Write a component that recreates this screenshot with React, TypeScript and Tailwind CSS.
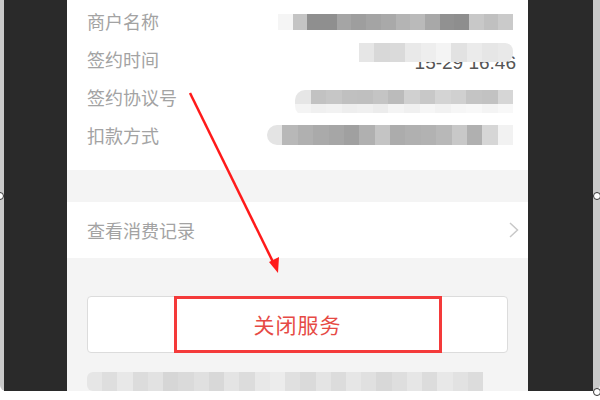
import React from "react";

const Blur = ({ colors, w, h, cls = "" }: { colors: string[]; w: number; h: number; cls?: string }) => (
  <div className={`flex overflow-hidden ${cls}`} style={{ width: w, height: h }}>
    {colors.map((c, i) => (
      <div key={i} className="flex-1 h-full" style={{ background: c }} />
    ))}
  </div>
);

const Blur2 = ({ top, bottom, w, h1, h2, cls = "" }: { top: string[]; bottom: string[]; w: number; h1: number; h2: number; cls?: string }) => (
  <div className={`flex flex-col overflow-hidden ${cls}`} style={{ width: w }}>
    <Blur colors={top} w={w} h={h1} />
    <Blur colors={bottom} w={w} h={h2} />
  </div>
);

export default function App() {
  const font = { fontFamily: '"Noto Sans CJK SC", "Noto Sans", sans-serif' };
  return (
    <div className="relative w-[600px] h-[400px] bg-white overflow-hidden" style={font}>
      <div className="flex h-[391px] bg-[#c9c9c9] rounded-b-[6px] pl-[4px] pr-[7px]">
        <div className="flex flex-1 bg-[#2a2a2a]">
          <div className="w-[63px]" />
          <div className="w-[461px] flex flex-col bg-[#f4f4f4]">
            {/* top info section */}
            <div className="bg-white h-[170px] pt-[2px] pl-[20px] pr-[15px] flex flex-col">
              <div className="h-[38px] flex justify-between">
                <span className="text-[18px] leading-[38px] text-[#a3a3a3]">商户名称</span>
                <Blur
                  cls="mt-[12px]"
                  w={235}
                  h={16}
                  colors={["#f5f5f5", "#c4c4c4", "#8f8f8f", "#8f8f8f", "#a5a5a5", "#9e9e9e", "#a4a4a4", "#a9a9a9", "#b4b4b4", "#bababa", "#a8a8a8", "#919191", "#8e8e8e", "#c8c8c8", "#c0c0c0", "#cacaca"]}
                />
              </div>
              <div className="h-[38px] flex justify-between">
                <span className="text-[18px] leading-[38px] text-[#a3a3a3]">签约时间</span>
                <div className="relative w-[157px] h-[38px] mr-[-3px]">
                  <span className="absolute right-0 top-[13px] text-[19px] leading-[19px] text-[#555]" style={{ fontFamily: '"Liberation Sans", sans-serif' }}>
                    15-29 16:46
                  </span>
                  <Blur
                    cls="absolute left-0 top-[3px] rounded-r-[8px]"
                    w={154}
                    h={19}
                    colors={["#e6e6e6", "#d8d8d8", "#dadada", "#e9e9e9", "#eeeeee", "#f4f4f4", "#e2e2e2", "#ebebeb", "#e6e6e6", "#e9e9e9"]}
                  />
                </div>
              </div>
              <div className="h-[38px] flex justify-between">
                <span className="text-[18px] leading-[38px] text-[#a3a3a3]">签约协议号</span>
                <Blur2
                  cls="mt-[12px] rounded-l-[10px]"
                  w={218}
                  h1={14}
                  h2={9}
                  top={["#e6e6e6", "#c2c2c2", "#c6c6c6", "#c0c0c0", "#bfbfbf", "#c4c4c4", "#bbbbbb", "#d0d0d0", "#c8c8c8", "#d4d4d4", "#d0d0d0", "#c4c4c4", "#c2c2c2", "#d6d6d6"]}
                  bottom={["#f4f4f4", "#f0f0f0", "#f2f2f2", "#eeeeee", "#f0f0f0", "#ececec", "#f4f4f4", "#f0f0f0", "#f6f6f6", "#f2f2f2", "#f6f6f6", "#f8f8f8", "#f4f4f4", "#f8f8f8"]}
                />
              </div>
              <div className="h-[38px] flex justify-between">
                <span className="text-[18px] leading-[38px] text-[#a3a3a3]">扣款方式</span>
                <Blur
                  cls="mt-[9px] rounded-l-[10px]"
                  w={246}
                  h={20}
                  colors={["#e4e4e4", "#b8b8b8", "#b0b0b0", "#aaaaaa", "#a6a6a6", "#a0a0a0", "#b0b0b0", "#c4c4c4", "#acacac", "#b0b0b0", "#b2b2b2", "#b8b8b8", "#c8c8c8", "#b0b0b0", "#d6d6d6", "#f2f2f2"]}
                />
              </div>
            </div>
            <div className="h-[32px]" />
            {/* consumption record row */}
            <div className="bg-white h-[56px] flex items-center justify-between pl-[20px] pr-[9px]">
              <span className="text-[18px] text-[#a3a3a3]">查看消费记录</span>
              <svg width="10" height="16" viewBox="0 0 10 16">
                <polyline points="1,1 8.5,8 1,15" fill="none" stroke="#c8c8c8" strokeWidth="1.5" />
              </svg>
            </div>
            {/* button */}
            <div className="pt-[38px] px-[20px]">
              <div className="relative h-[57px] bg-white border border-[#dcdcdc] rounded-[4px] flex items-center justify-center">
                <span className="text-[21px] text-[#e64a45] tracking-[1px]">关闭服务</span>
                <div className="absolute left-[86px] top-[-1px] w-[268px] h-[57px] border-[3px] border-[#f43a3a]" />
              </div>
            </div>
            <div className="pt-[19px] px-[20px]">
              <Blur
                cls="rounded-l-[6px]"
                w={396}
                h={19}
                colors={["#e6e6e6", "#dedede", "#e8e8e8", "#dcdcdc", "#e2e2e2", "#d6d6d6", "#dadada", "#e0e0e0", "#d8d8d8", "#e4e4e4", "#dcdcdc", "#e8e8e8", "#ececec", "#e0e0e0", "#dadada", "#e4e4e4", "#dcdcdc", "#e6e6e6", "#e0e0e0", "#d8d8d8", "#dedede", "#e6e6e6", "#dcdcdc", "#e8e8e8", "#e2e2e2", "#dcdcdc"]}
              />
            </div>
          </div>
        </div>
      </div>
      {/* annotation arrow */}
      <svg className="absolute left-0 top-0 pointer-events-none" width="600" height="400">
        <line x1="190" y1="93" x2="274" y2="264" stroke="#ff1a1a" strokeWidth="2.5" />
        <polygon points="278,273 269,262 279,257" fill="#ff1a1a" />
      </svg>
      {/* selection handles */}
      <div className="absolute left-[-4px] top-[192px] w-[8px] h-[8px] rounded-full bg-white border border-[#333]" />
      <div className="absolute left-[593px] top-[192px] w-[8px] h-[8px] rounded-full bg-white border border-[#333]" />
      <div className="absolute left-[593px] top-[388px] w-[8px] h-[8px] rounded-full bg-white border border-[#333]" />
    </div>
  );
}
